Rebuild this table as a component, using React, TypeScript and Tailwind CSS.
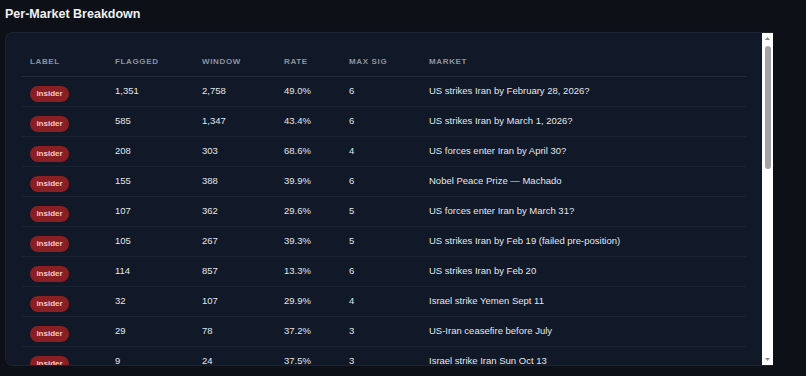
import React from 'react';

interface MarketRow {
  flagged: string;
  window: string;
  rate: string;
  maxSig: number;
  market: string;
}

const rows: MarketRow[] = [
  { flagged: '1,351', window: '2,758', rate: '49.0%', maxSig: 6, market: 'US strikes Iran by February 28, 2026?' },
  { flagged: '585', window: '1,347', rate: '43.4%', maxSig: 6, market: 'US strikes Iran by March 1, 2026?' },
  { flagged: '208', window: '303', rate: '68.6%', maxSig: 4, market: 'US forces enter Iran by April 30?' },
  { flagged: '155', window: '388', rate: '39.9%', maxSig: 6, market: 'Nobel Peace Prize — Machado' },
  { flagged: '107', window: '362', rate: '29.6%', maxSig: 5, market: 'US forces enter Iran by March 31?' },
  { flagged: '105', window: '267', rate: '39.3%', maxSig: 5, market: 'US strikes Iran by Feb 19 (failed pre-position)' },
  { flagged: '114', window: '857', rate: '13.3%', maxSig: 6, market: 'US strikes Iran by Feb 20' },
  { flagged: '32', window: '107', rate: '29.9%', maxSig: 4, market: 'Israel strike Yemen Sept 11' },
  { flagged: '29', window: '78', rate: '37.2%', maxSig: 3, market: 'US-Iran ceasefire before July' },
  { flagged: '9', window: '24', rate: '37.5%', maxSig: 3, market: 'Israel strike Iran Sun Oct 13' },
  { flagged: '8', window: '31', rate: '25.8%', maxSig: 3, market: 'Khamenei out as Supreme Leader by March 31?' },
  { flagged: '7', window: '22', rate: '31.8%', maxSig: 4, market: 'Israel strikes Iran by January 31?' },
];

const cols = ['Label', 'Flagged', 'Window', 'Rate', 'Max Sig', 'Market'];
const widths = ['w-[85px]', 'w-[87px]', 'w-[82px]', 'w-[65px]', 'w-[80px]', ''];

// light classic scrollbar, as the panel shows it
const ScrollBar = () => (
  <div className="flex w-[11px] shrink-0 flex-col items-center bg-white">
    <svg width="11" height="12" viewBox="0 0 11 12" className="shrink-0">
      <path d="M3 7 L5.5 4 L8 7 Z" fill="#8a8a8a" />
    </svg>
    <div className="mt-[1px] h-[123px] w-[6px] rounded-full bg-[#a3a3a3]" />
    <div className="flex-1" />
    <svg width="11" height="12" viewBox="0 0 11 12" className="shrink-0">
      <path d="M3 5 L5.5 8 L8 5 Z" fill="#8a8a8a" />
    </svg>
  </div>
);

export default function App() {
  return (
    <div
      className="w-[806px] h-[376px] overflow-hidden bg-[#0d1017] px-[5px] pt-[6px]"
      style={{ fontFamily: '"Liberation Sans", Arial, sans-serif' }}
    >
      <h2 className="text-[12.5px] leading-[17px] font-bold text-[#eef0f3] mb-[9px]">Per-Market Breakdown</h2>

      <div className="flex w-[768px] h-[334px] overflow-hidden rounded-l-lg border border-r-0 border-[#1c2333] bg-[#111827]">
        <div className="flex-1 overflow-hidden px-4 pt-4">
          <table className="w-full table-fixed border-collapse">
            <thead>
              <tr className="border-b border-[#232c3c]">
                {cols.map((c, i) => (
                  <th
                    key={c}
                    className={`${widths[i]} h-[27px] pl-2 text-left align-middle text-[8px] font-bold uppercase tracking-[0.08em] text-[#8b93a1]`}
                  >
                    {c}
                  </th>
                ))}
              </tr>
            </thead>
            <tbody>
              {rows.map((r, i) => (
                <tr key={i} className="border-b border-[#1b2333]">
                  <td className="h-[30px] pl-2 align-middle">
                    <span className="inline-flex h-[16px] w-[39px] items-center justify-center rounded-full bg-[#8a1f23] text-[8px] font-bold text-[#f3c9c9]">
                      insider
                    </span>
                  </td>
                  <td className="pl-2 align-middle text-[9.5px] text-[#e3e6ea]">{r.flagged}</td>
                  <td className="pl-2 align-middle text-[9.5px] text-[#e3e6ea]">{r.window}</td>
                  <td className="pl-2 align-middle text-[9.5px] text-[#e3e6ea]">{r.rate}</td>
                  <td className="pl-2 align-middle text-[9.5px] text-[#e3e6ea]">{r.maxSig}</td>
                  <td className="pl-2 align-middle text-[9.5px] text-[#e3e6ea] truncate">{r.market}</td>
                </tr>
              ))}
            </tbody>
          </table>
        </div>
        <ScrollBar />
      </div>
    </div>
  );
}
